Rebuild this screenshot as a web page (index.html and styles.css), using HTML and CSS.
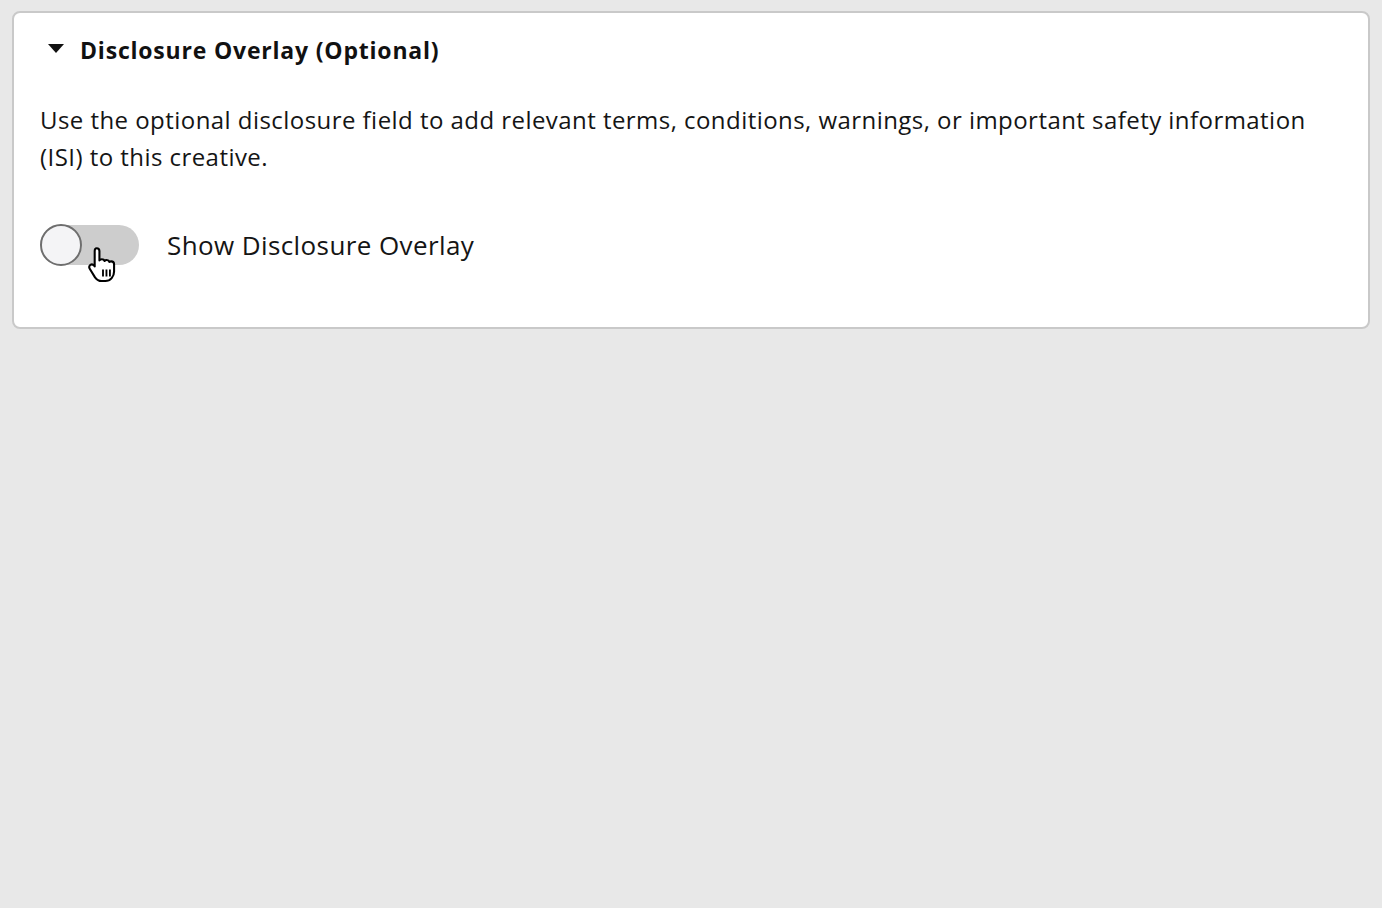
FILE: index.html
```html
<!DOCTYPE html>
<html>
<head>
<meta charset="utf-8">
<link rel="stylesheet" href="styles.css">
</head>
<body>
<section class="card">
  <div class="header">
    <svg class="caret" width="16" height="10" viewBox="0 0 16 10"><path d="M0 0 H16 L8 9 Z" fill="#111"/></svg>
    <h2 class="title">Disclosure Overlay (Optional)</h2>
  </div>
  <p class="desc">Use the optional disclosure field to add relevant terms, conditions, warnings, or important safety information (ISI) to this creative.</p>
  <div class="row">
    <div class="toggle">
      <span class="knob"></span>
      <svg class="cursor" width="30" height="37" viewBox="1.5 1.5 26 32">
        <path d="M9 2.5c1.4 0 2.4 1 2.4 2.4v8.2c.5-.7 1.3-1 2.1-1 1.1 0 2 .6 2.3 1.5.4-.5 1.1-.8 1.9-.8 1.1 0 2 .6 2.3 1.6.4-.3 1-.5 1.6-.5 1.5 0 2.5 1.1 2.5 2.6v6.2c0 4.3-3 8.3-7.6 8.3h-3.2c-2.6 0-4.3-1.2-5.7-3.2L3 20.3c-.8-1.2-.5-2.6.6-3.3 1-.7 2.3-.4 3.1.5l.6.8V4.9C7.3 3.5 7.8 2.5 9 2.5z" fill="#fff" stroke="#000" stroke-width="1.8" stroke-linejoin="round"/>
        <path d="M14.5 21v6M17.5 21v6M20.5 21v6" stroke="#000" stroke-width="1.6"/>
      </svg>
    </div>
    <span class="label">Show Disclosure Overlay</span>
  </div>
</section>
</body>
</html>
```
FILE: styles.css
```css
html, body {
  margin: 0;
  padding: 0;
  background: #e8e8e8;
  font-family: "Open Sans", "Liberation Sans", sans-serif;
  color: #151515;
}
body {
  padding: 11px 12px;
  height: 908px;
  box-sizing: border-box;
}
.card {
  background: #fff;
  border: 2px solid #c9c9c9;
  border-radius: 8px;
  height: 318px;
  box-sizing: border-box;
  padding: 20px 26px 0 26px;
}
.header {
  display: flex;
  align-items: center;
  gap: 16px;
  padding-left: 8px;
  height: 34px;
}
.caret { flex: none; margin-top: -2px; }
.title {
  margin: 0;
  font-size: 23px;
  font-weight: 700;
  letter-spacing: 0.8px;
  color: #111;
}
.desc {
  margin: 34px 0 0 0;
  font-size: 24px;
  line-height: 37px;
  letter-spacing: 0.45px;
  max-width: 1295px;
}
.row {
  display: flex;
  align-items: center;
  gap: 28px;
  margin-top: 50px;
}
.toggle {
  position: relative;
  width: 99px;
  height: 40px;
  border-radius: 20px;
  background: #cdcdcd;
  flex: none;
}
.knob {
  position: absolute;
  left: 0;
  top: -1px;
  width: 42px;
  height: 42px;
  box-sizing: border-box;
  border-radius: 50%;
  background: #f4f4f6;
  border: 2.5px solid #6e6e6e;
}
.cursor {
  position: absolute;
  left: 48px;
  top: 22px;
}
.label {
  font-size: 26px;
  letter-spacing: 0.4px;
}
```
